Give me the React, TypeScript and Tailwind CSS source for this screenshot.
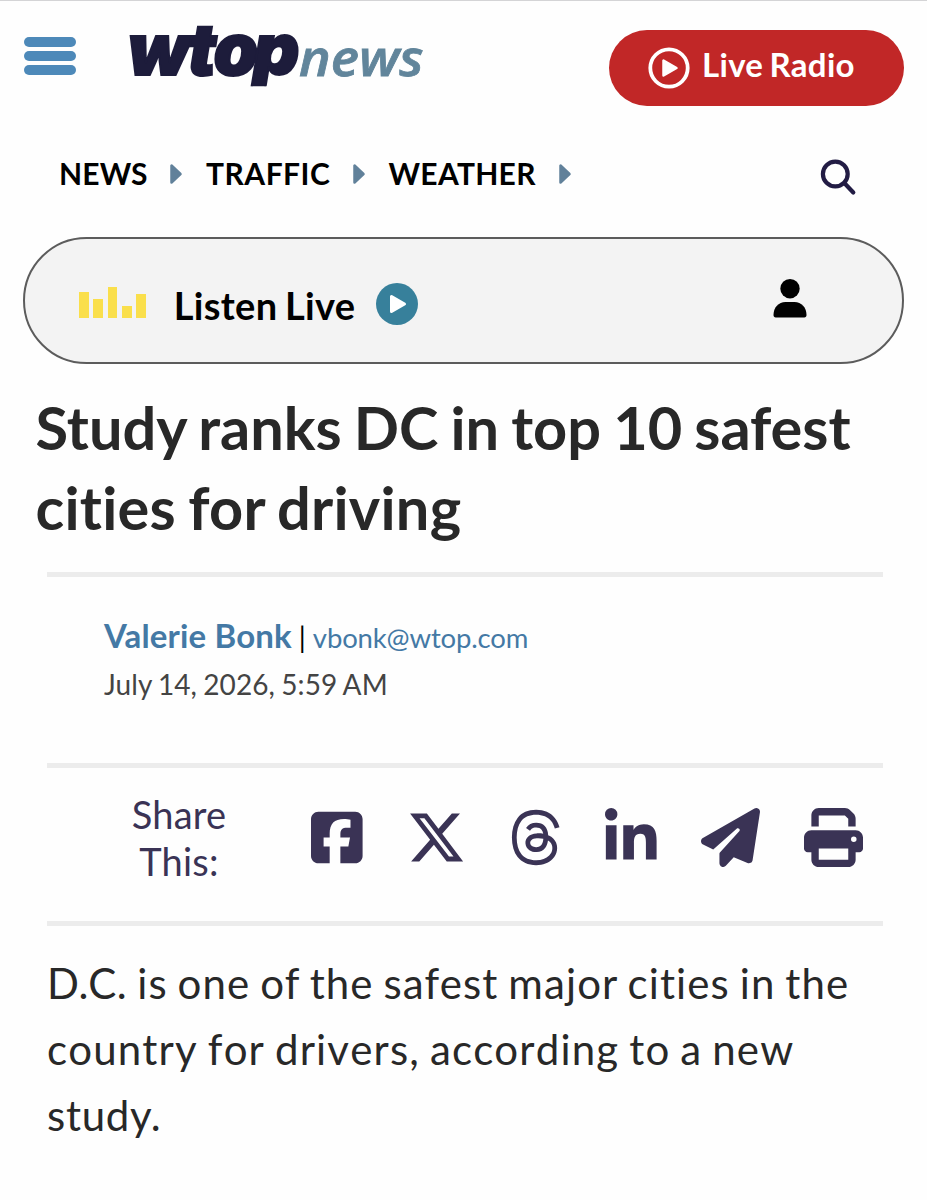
import { FaLinkedinIn, FaPaperPlane, FaPrint, FaSquareFacebook, FaThreads, FaXTwitter } from 'react-icons/fa6';

const navLinks = [
  { label: 'NEWS', style: 'w-[88px] tracking-[0.15px]' },
  { label: 'TRAFFIC', style: 'w-[123.5px] tracking-[0.5px]' },
  { label: 'WEATHER', style: 'w-[147px] tracking-[0.3px]' },
];

const shareLinks = [
  { name: 'Facebook', icon: FaSquareFacebook, width: 'w-[51.6px]' },
  { name: 'X', icon: FaXTwitter, width: 'w-[59px]' },
  { name: 'Threads', icon: FaThreads, width: 'w-[51.6px]' },
  { name: 'LinkedIn', icon: FaLinkedinIn, width: 'w-[51.6px]' },
  { name: 'Send', icon: FaPaperPlane, width: 'w-[59px]' },
  { name: 'Print', icon: FaPrint, width: 'w-[59px]' },
];

function Logo() {
  return (
    <svg className="ml-[50px] h-[66px] w-[300px] overflow-visible" viewBox="126 22 300 66" aria-label="wtop news">
      <clipPath id="logo-clip">
        <rect x="120" y="20" width="190" height="66.3" />
      </clipPath>
      <g clipPath="url(#logo-clip)">
        <text
          x="127.5 187.5 213.5 253.3"
          y="74.7"
          fill="#1d1c3b"
          stroke="#1d1c3b"
          strokeWidth="2"
          className="font-['Inter',sans-serif] text-[71.5px] font-black italic"
        >
          wtop
        </text>
      </g>
      <text
        x="299"
        y="75.5"
        textLength="124.5"
        lengthAdjust="spacingAndGlyphs"
        fill="#61859b"
        stroke="#61859b"
        strokeWidth="0.8"
        className="font-['Open_Sans',sans-serif] text-[51px] font-semibold italic"
      >
        news
      </text>
    </svg>
  );
}

function Header() {
  return (
    <header className="flex h-[107px] items-start border-t border-[#d4d4d6] pl-6 pr-[23.5px]">
      <button className="mt-9 flex w-[52px] flex-col gap-[4.5px]" aria-label="Menu">
        <span className="h-[9.5px] w-full rounded-full bg-[#4d89b9]" />
        <span className="h-[9.5px] w-full rounded-full bg-[#4d89b9]" />
        <span className="h-[9.5px] w-full rounded-full bg-[#4d89b9]" />
      </button>
      <div className="mt-[21px]">
        <Logo />
      </div>
      <button className="ml-auto mt-[29px] flex h-[76px] w-[295px] items-center rounded-full bg-[#c12727] pl-[39.5px] text-white">
        <svg className="h-[42px] w-[42px]" viewBox="0 0 42 42">
          <circle cx="21" cy="21" r="18.7" fill="none" stroke="currentColor" strokeWidth="3.8" />
          <path d="M15.5 13.5v15l13-7.5z" fill="currentColor" stroke="currentColor" strokeWidth="2.5" strokeLinejoin="round" />
        </svg>
        <span className="-mt-2 ml-3 whitespace-nowrap text-[33px] font-bold leading-10 tracking-[0.3px] [word-spacing:-2px]">
          Live Radio
        </span>
      </button>
    </header>
  );
}

function NavBar() {
  return (
    <nav className="flex h-[130px] items-start pl-[59px] pr-[70px] pt-[46px]">
      {navLinks.map((link) => (
        <div key={link.label} className="flex h-10 items-center">
          <span className={`${link.style} whitespace-nowrap text-[30px] font-bold leading-10 text-black`}>{link.label}</span>
          <svg className="ml-[23px] mr-6 mt-0.5 h-[22px] w-3" viewBox="0 0 12 22">
            <path d="M1.5 2.5v17L10.5 11z" fill="#61819a" stroke="#61819a" strokeWidth="2.5" strokeLinejoin="round" />
          </svg>
        </div>
      ))}
      <svg
        className="ml-auto mt-[5px] h-[38px] w-[38px]"
        viewBox="0 0 38 38"
        fill="none"
        stroke="#221c44"
        strokeWidth="4.2"
        strokeLinecap="round"
      >
        <circle cx="16.3" cy="16" r="12.4" />
        <path d="M25.3 25l9 9.5" />
      </svg>
    </nav>
  );
}

function ListenBar() {
  return (
    <section className="mx-[23px] flex h-[127px] items-center rounded-full border-2 border-[#5c5c5c] bg-[#f3f3f3] pl-[54px] pr-[95.5px]">
      <div className="mt-1 flex h-[31px] items-end gap-[4.6px]">
        <span className="h-[26px] w-[9.7px] bg-[#fadf4b]" />
        <span className="h-[19px] w-[9.7px] bg-[#fadf4b]" />
        <span className="h-[31px] w-[9.7px] bg-[#fadf4b]" />
        <span className="h-3 w-[9.7px] bg-[#fadf4b]" />
        <span className="h-6 w-[9.7px] bg-[#fadf4b]" />
      </div>
      <span className="ml-7 mt-2 w-[181px] whitespace-nowrap text-[38px] font-bold leading-[46px] tracking-[0.3px] text-black [word-spacing:-2px]">
        Listen Live
      </span>
      <svg className="ml-[21.5px] mt-1.5 h-[42px] w-[42px]" viewBox="0 0 42 42">
        <circle cx="21" cy="21" r="21" fill="#37809b" />
        <path d="M15.5 13.5v15L28.5 21z" fill="#fff" stroke="#fff" strokeWidth="3" strokeLinejoin="round" />
      </svg>
      <svg className="-mt-1 ml-auto h-[39px] w-[34px]" viewBox="0 0 34 39">
        <circle cx="17" cy="9.7" r="9.7" />
        <path d="M12.5 23h9C28.4 23 33.5 28.5 33.5 36c0 1.5-.8 2.5-2.2 2.5H2.7C1.3 38.5.5 37.5.5 36 .5 28.5 5.6 23 12.5 23z" />
      </svg>
    </section>
  );
}

export default function App() {
  return (
    <div className="h-[1200px] w-[927px] overflow-hidden bg-[#fefefe] font-['Lato',sans-serif] [font-variant-ligatures:none]">
      <Header />
      <NavBar />
      <ListenBar />

      <main>
        <h1 className="ml-[35.5px] mt-[23px] whitespace-nowrap text-[59.5px] font-bold leading-[80px] text-[#282828] [word-spacing:-2.4px]">
          <span className="block">Study ranks DC in top 10 safest</span>
          <span className="block tracking-[0.25px]">cities for driving</span>
        </h1>

        {/* Byline */}
        <section className="ml-[47px] mr-11 mt-[25px] h-[191px] border-t-[5px] border-[#ececec] pl-[57px] pt-[37px]">
          <div className="flex h-[49px] items-baseline whitespace-nowrap leading-[42px]">
            <a className="text-[33px] font-bold tracking-[0.15px] text-[#4479a5]">Valerie Bonk</a>
            <span className="mx-[7px] text-[28px] text-black">|</span>
            <a className="text-[27.5px] tracking-[-0.15px] text-[#4479a5]">vbonk@wtop.com</a>
          </div>
          <p className="whitespace-nowrap text-[28px] leading-[42px] tracking-[0.08px] text-[#444] [word-spacing:-1px]">
            July 14, 2026, 5:59 AM
          </p>
        </section>

        {/* Share */}
        <section className="ml-[47px] mr-11 flex h-[158px] border-t-[5px] border-[#ececec] pl-[72px] pt-[23px] text-[#3a3355]">
          <p className="w-[120px] text-center text-[38px] leading-[47px] tracking-[0.2px]">
            Share
            <br />
            This:
          </p>
          <div className="ml-[72px] mt-[17px] flex h-[59px] gap-11">
            {shareLinks.map((link) => (
              <link.icon key={link.name} title={link.name} className={`${link.width} h-[59px] shrink-0`} />
            ))}
          </div>
        </section>

        {/* Story */}
        <section className="ml-[47px] mr-11 border-t-[5px] border-[#ececec] pt-6">
          <p className="whitespace-nowrap text-[42px] leading-[66px] text-[#282828] [word-spacing:-2px]">
            <span className="block tracking-[1.12px]">
              <span className="tracking-[0.6px]">D.C.</span> is one of the safest major cities in the
            </span>
            <span className="block tracking-[1.16px] [font-kerning:none]">country for drivers, according to a new</span>
            <span className="block tracking-[0.7px]">study.</span>
          </p>
        </section>
      </main>
    </div>
  );
}
